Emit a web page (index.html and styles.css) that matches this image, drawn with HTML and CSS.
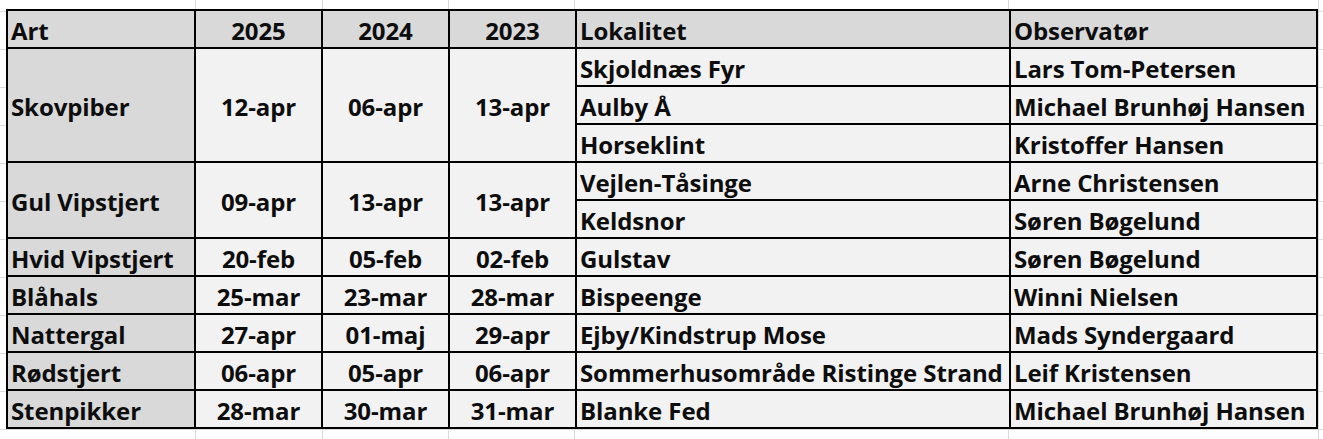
FILE: index.html
```html
<!DOCTYPE html>
<html lang="da">
<head>
<meta charset="utf-8">
<title>Første observationer</title>
<link rel="stylesheet" href="styles.css">
</head>
<body>
<div class="sheet">
  <table class="obs">
    <colgroup>
      <col class="c-art"><col class="c-year"><col class="c-year"><col class="c-year"><col class="c-lok"><col class="c-obs">
    </colgroup>
    <thead>
      <tr class="head">
        <th class="left">Art</th><th>2025</th><th>2024</th><th>2023</th><th class="left">Lokalitet</th><th class="left">Observatør</th>
      </tr>
    </thead>
    <tbody>
      <tr class="grp">
        <td class="art" rowspan="3">Skovpiber</td><td class="yr" rowspan="3">12-apr</td><td class="yr" rowspan="3">06-apr</td><td class="yr" rowspan="3">13-apr</td><td class="txt">Skjoldnæs Fyr</td><td class="txt">Lars Tom-Petersen</td>
      </tr>
      <tr class="sub">
        <td class="txt">Aulby Å</td><td class="txt">Michael Brunhøj Hansen</td>
      </tr>
      <tr class="sub">
        <td class="txt">Horseklint</td><td class="txt">Kristoffer Hansen</td>
      </tr>
      <tr class="grp">
        <td class="art" rowspan="2">Gul Vipstjert</td><td class="yr" rowspan="2">09-apr</td><td class="yr" rowspan="2">13-apr</td><td class="yr" rowspan="2">13-apr</td><td class="txt">Vejlen-Tåsinge</td><td class="txt">Arne Christensen</td>
      </tr>
      <tr class="sub">
        <td class="txt">Keldsnor</td><td class="txt">Søren Bøgelund</td>
      </tr>
      <tr class="grp">
        <td class="art">Hvid Vipstjert</td><td class="yr">20-feb</td><td class="yr">05-feb</td><td class="yr">02-feb</td><td class="txt">Gulstav</td><td class="txt">Søren Bøgelund</td>
      </tr>
      <tr class="grp">
        <td class="art">Blåhals</td><td class="yr">25-mar</td><td class="yr">23-mar</td><td class="yr">28-mar</td><td class="txt">Bispeenge</td><td class="txt">Winni Nielsen</td>
      </tr>
      <tr class="grp">
        <td class="art">Nattergal</td><td class="yr">27-apr</td><td class="yr">01-maj</td><td class="yr">29-apr</td><td class="txt">Ejby/Kindstrup Mose</td><td class="txt">Mads Syndergaard</td>
      </tr>
      <tr class="grp">
        <td class="art">Rødstjert</td><td class="yr">06-apr</td><td class="yr">05-apr</td><td class="yr">06-apr</td><td class="txt">Sommerhusområde Ristinge Strand</td><td class="txt">Leif Kristensen</td>
      </tr>
      <tr class="grp">
        <td class="art">Stenpikker</td><td class="yr">28-mar</td><td class="yr">30-mar</td><td class="yr">31-mar</td><td class="txt">Blanke Fed</td><td class="txt">Michael Brunhøj Hansen</td>
      </tr>
    </tbody>
  </table>
</div>
</body>
</html>
```

FILE: styles.css
```css
html, body {
  margin: 0;
  padding: 0;
  background: #ffffff;
}

.sheet {
  width: 1323px;
  height: 439px;
  box-sizing: border-box;
  padding: 9px 0 0 6px;
  overflow: hidden;
  background-color: #ffffff;
  background-image:
    linear-gradient(to right, transparent 195px, #d9d9d9 195px, #d9d9d9 196px, transparent 196px),
    linear-gradient(to right, transparent 322px, #d9d9d9 322px, #d9d9d9 323px, transparent 323px),
    linear-gradient(to right, transparent 448px, #d9d9d9 448px, #d9d9d9 449px, transparent 449px),
    linear-gradient(to right, transparent 574px, #d9d9d9 574px, #d9d9d9 575px, transparent 575px),
    linear-gradient(to right, transparent 1008px, #d9d9d9 1008px, #d9d9d9 1009px, transparent 1009px),
    linear-gradient(to right, transparent 1318px, #d9d9d9 1318px, #d9d9d9 1319px, transparent 1319px),
    repeating-linear-gradient(to bottom, transparent 0, transparent 11px, #dcdcdc 11px, #dcdcdc 12px, transparent 12px, transparent 38px);
}

.obs {
  border-collapse: collapse;
  table-layout: fixed;
  width: 1310px;
  border: 2px solid #000;
  font-family: "Open Sans", "Liberation Sans", sans-serif;
  font-weight: 700;
  font-size: 24px;
  letter-spacing: -0.1px;
  color: #0d0d0d;
}

.c-art { width: 188px; }
.c-year { width: 127px; }
.c-lok { width: 434px; }
.c-obs { width: 307px; }

.obs th,
.obs td {
  height: 38px;
  padding: 3px 3px 0 3px;
  border: 2px solid #000;
  white-space: nowrap;
  overflow: hidden;
  line-height: 32px;
  box-sizing: border-box;
}

.obs th {
  background: #d9d9d9;
  text-align: center;
  font-weight: 700;
}

.obs th.left { text-align: left; }

.obs td.art {
  background: #d9d9d9;
  text-align: left;
}

.obs td.yr {
  background: #f2f2f2;
  text-align: center;
}

.obs td.txt {
  background: #f2f2f2;
  text-align: left;
}

.obs tr.sub td {
  border-top: 1px solid #000;
}
```
